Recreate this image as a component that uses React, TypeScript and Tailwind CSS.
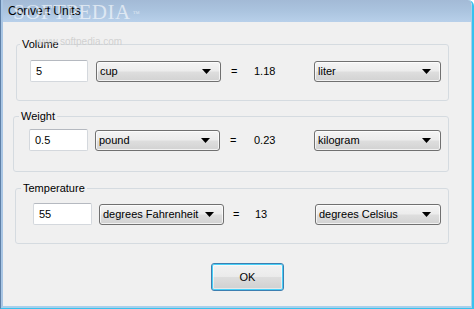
import React from "react";

// Vista-style "Convert Units" dialog. Body text stands in for Tahoma 8pt,
// the caption for Segoe UI 9pt — Liberation Sans has close enough widths.

const COMBO =
  "relative flex items-center h-[21px] rounded-[3px] border border-[#707070] pl-[3px] bg-[linear-gradient(to_bottom,#f4f4f4_0%,#ececec_48%,#dedede_52%,#d2d2d2_100%)] shadow-[inset_0_0_0_1px_rgba(255,255,255,0.7)]";
const INPUT =
  "flex items-center h-[22px] rounded-[2px] border border-[#d4d8dd] border-t-[#b5b9c0] bg-white pl-[5px]";

function Combo({ value, className }: { value: string; className: string }) {
  return (
    <div className={`${COMBO} ${className}`}>
      <span className="flex-1 truncate leading-none">{value}</span>
      <svg width="9" height="5" viewBox="0 0 9 5" className="mr-[9px]">
        <path d="M0 0h9L4.5 5z" fill="#000" />
      </svg>
    </div>
  );
}

export default function App() {
  return (
    <div
      className="relative w-[474px] h-[309px] overflow-hidden rounded-tr-[6px] border-l border-r-2 border-b border-l-[#5e7fa6] border-r-[#37c2ee] border-b-[#37c2ee] text-[11px] text-black"
      style={{ fontFamily: '"Liberation Sans", Arial, sans-serif' }}
    >
      <div className="flex h-full flex-col border-l-2 border-r border-b-2 border-l-[#a9c6e4] border-r-[#a8d0ec] border-b-[#a8d0ec]">
        {/* caption */}
        <div className="flex h-[22px] shrink-0 items-center bg-[linear-gradient(to_bottom,#a3bad6_0%,#abc4df_50%,#b8d0ea_100%)] pl-[5px] text-[12px]">
          Convert Units
        </div>

        {/* client area */}
        <div className="flex flex-1 flex-col bg-[#f0f0f0]">
          <fieldset className="ml-[13px] mt-[15px] w-[433px] rounded-[3px] border border-[#d5dbe0]">
            <legend className="ml-[3px] px-[2px] leading-[14px]">Volume</legend>
            <div className="flex items-center pl-[13px] pt-[9px] pb-[18px]">
              <div className={`${INPUT} w-[58px]`}>5</div>
              <Combo value="cup" className="ml-[8px] w-[125px]" />
              <span className="ml-[10px] w-[23px]">=</span>
              <span className="w-[60px]">1.18</span>
              <Combo value="liter" className="w-[127px]" />
            </div>
          </fieldset>

          <fieldset className="ml-[10px] mt-[8px] w-[436px] rounded-[3px] border border-[#d5dbe0]">
            <legend className="ml-[5px] px-[2px] leading-[14px]">Weight</legend>
            <div className="flex items-center pl-[15px] pt-[6px] pb-[20px]">
              <div className={`${INPUT} w-[59px]`}>0.5</div>
              <Combo value="pound" className="ml-[7px] w-[125px]" />
              <span className="ml-[10px] w-[24px]">=</span>
              <span className="w-[60px]">0.23</span>
              <Combo value="kilogram" className="w-[127px]" />
            </div>
          </fieldset>

          <fieldset className="ml-[12px] mt-[9px] w-[434px] rounded-[3px] border border-[#d5dbe0]">
            <legend className="ml-[5px] px-[2px] leading-[14px]">Temperature</legend>
            <div className="flex items-center pl-[17px] pt-[8px] pb-[18px]">
              <div className={`${INPUT} w-[59px]`}>55</div>
              <Combo value="degrees Fahrenheit" className="ml-[7px] w-[125px]" />
              <span className="ml-[9px] w-[22px]">=</span>
              <span className="w-[60px]">13</span>
              <Combo value="degrees Celsius" className="w-[126px]" />
            </div>
          </fieldset>

          <div className="mt-[19px] pl-[208px]">
            <button className="flex h-[28px] w-[73px] items-center justify-center rounded-[3px] border border-[#3c7fb1] bg-[linear-gradient(to_bottom,#f2f2f2_0%,#ebebeb_48%,#dddddd_52%,#cfcfcf_100%)] shadow-[inset_0_0_0_1px_#48cff7,inset_0_0_0_2px_rgba(255,255,255,0.5)]">
              OK
            </button>
          </div>
        </div>
      </div>

      {/* Softpedia watermark */}
      <div
        className="pointer-events-none absolute left-[12px] top-[2px] text-[21px] leading-none tracking-[0.5px] text-white/60"
        style={{ fontFamily: '"Liberation Serif", "Times New Roman", serif' }}
      >
        SOFTPEDIA<sup className="ml-[2px] text-[7px] text-white/60">™</sup>
      </div>
      <div className="pointer-events-none absolute left-[35px] top-[37px] text-[10px] leading-none text-[#c9c9c9]/80">
        www.softpedia.com
      </div>
    </div>
  );
}
